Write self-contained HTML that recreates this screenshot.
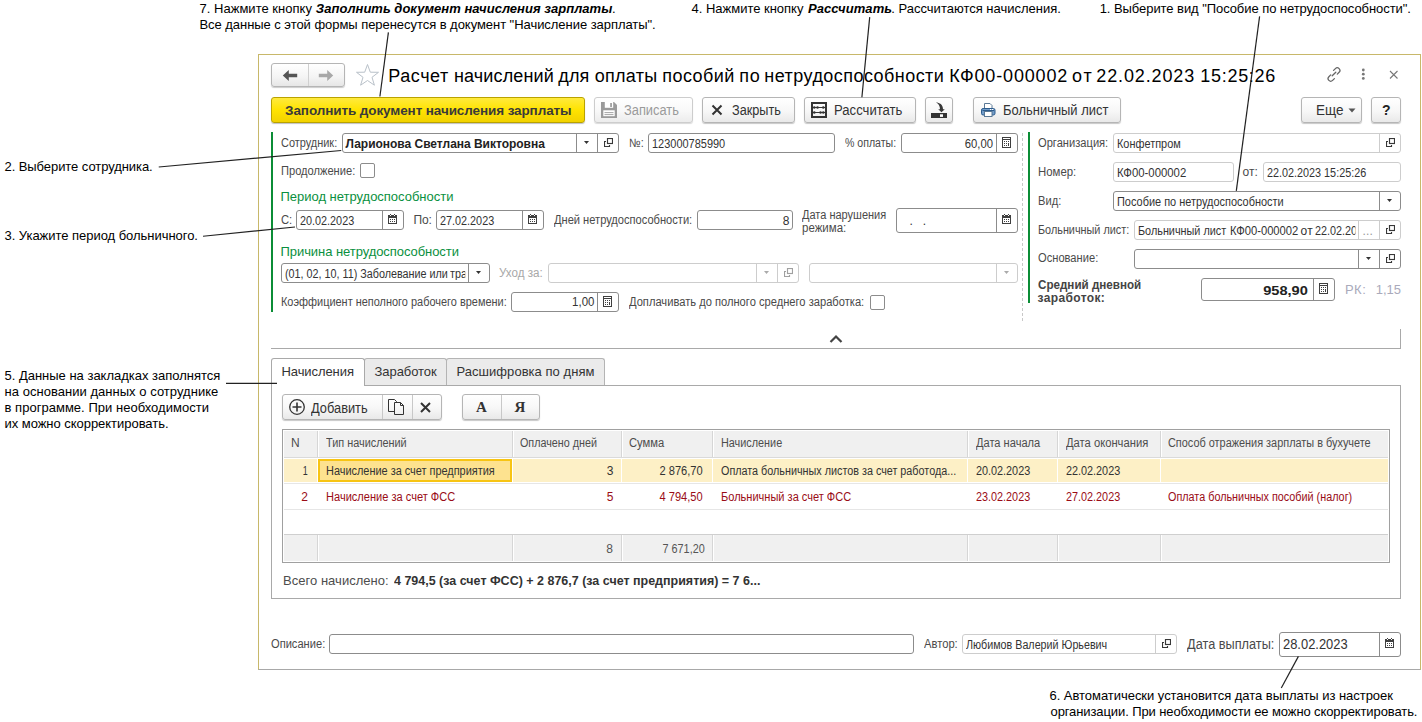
<!DOCTYPE html>
<html><head><meta charset="utf-8"><title>1C</title>
<style>
html,body{margin:0;padding:0;background:#fff;width:1422px;height:722px;overflow:hidden;position:relative;font-family:"Liberation Sans", sans-serif;}
body>div,body>svg{position:absolute;box-sizing:border-box;}
.t{white-space:pre;}
.btn{border:1px solid #b5b5b5;border-radius:3px;background:linear-gradient(#ffffff,#f7f7f7 55%,#e9e9e9);box-shadow:0 1px 1px rgba(0,0,0,0.22);}
.fld{border:1px solid #8f8f8f;border-radius:3px;background:#fff;}
.fldl{border:1px solid #cfcfcf;border-radius:3px;background:#fff;}
</style></head><body>
<div style="left:258px;top:54px;width:1163px;height:616px;border:1px solid #c8b86a;border-bottom-color:#a8a8a8;"></div>
<div style="left:271px;top:63px;width:74px;height:24px;border:1px solid #b5b5b5;border-radius:3px;background:linear-gradient(#fff,#f4f4f4 60%,#e6e6e6);box-shadow:0 1px 1px rgba(0,0,0,.2);"></div>
<div style="left:308px;top:64px;width:1px;height:22px;background:#d0d0d0;"></div>
<svg style="left:282px;top:69px" width="16" height="13" viewBox="0 0 16 13"><path d="M0.8 6.5 L6.8 1 L6.8 4.7 L15.2 4.7 L15.2 8.3 L6.8 8.3 L6.8 12 Z" fill="#555"/></svg>
<svg style="left:318px;top:69px" width="16" height="13" viewBox="0 0 16 13"><path d="M15.2 6.5 L9.2 1 L9.2 4.7 L0.8 4.7 L0.8 8.3 L9.2 8.3 L9.2 12 Z" fill="#a8a8a8"/></svg>
<svg style="left:355px;top:63px" width="25" height="24" viewBox="0 0 25 24"><path d="M12.5 1.5 L15.3 9.2 L23.5 9.3 L17 14.3 L19.4 22.2 L12.5 17.5 L5.6 22.2 L8 14.3 L1.5 9.3 L9.7 9.2 Z" fill="none" stroke="#b9c1c9" stroke-width="1"/></svg>
<div class="t" style="top:66.76px;font-size:18px;line-height:18px;color:#000;letter-spacing:0.543px;left:388.30px;">Расчет</div>
<div class="t" style="top:66.76px;font-size:18px;line-height:18px;color:#000;letter-spacing:0.146px;left:454.00px;">начислений</div>
<div class="t" style="top:66.76px;font-size:18px;line-height:18px;color:#000;letter-spacing:0.107px;left:558.30px;">для</div>
<div class="t" style="top:66.76px;font-size:18px;line-height:18px;color:#000;letter-spacing:0.304px;left:594.70px;">оплаты</div>
<div class="t" style="top:66.76px;font-size:18px;line-height:18px;color:#000;letter-spacing:0.432px;left:662.30px;">пособий</div>
<div class="t" style="top:66.76px;font-size:18px;line-height:18px;color:#000;letter-spacing:0.614px;left:739.30px;">по</div>
<div class="t" style="top:66.76px;font-size:18px;line-height:18px;color:#000;letter-spacing:0.454px;left:764.30px;">нетрудоспособности</div>
<div class="t" style="top:66.76px;font-size:18px;line-height:18px;color:#000;letter-spacing:0.834px;left:949.30px;">КФ00-000002</div>
<div class="t" style="top:66.76px;font-size:18px;line-height:18px;color:#000;letter-spacing:1.921px;left:1071.90px;">от</div>
<div class="t" style="top:66.76px;font-size:18px;line-height:18px;color:#000;letter-spacing:0.876px;left:1096.30px;">22.02.2023</div>
<div class="t" style="top:66.76px;font-size:18px;line-height:18px;color:#000;letter-spacing:0.700px;left:1200.30px;">15:25:26</div>
<svg style="left:1325px;top:66px" width="18" height="17" viewBox="0 0 18 17"><g fill="none" stroke="#666" stroke-width="1.3" stroke-linecap="round"><path d="M7.2 9.8 L10.8 6.2"/><path d="M8.6 4.4 L10.4 2.6 a2.6 2.6 0 0 1 3.7 3.7 L12.3 8.1"/><path d="M9.4 12.6 L7.6 14.4 a2.6 2.6 0 0 1 -3.7 -3.7 L5.7 8.9"/></g></svg>
<svg style="left:1360px;top:68px" width="7" height="13" viewBox="0 0 7 13"><g fill="#777"><circle cx="3.3" cy="2" r="1.4"/><circle cx="3.3" cy="6.2" r="1.4"/><circle cx="3.3" cy="10.4" r="1.4"/></g></svg>
<svg style="left:1389px;top:70px" width="10" height="10" viewBox="0 0 10 10"><path d="M1 1 L8.5 8.5 M8.5 1 L1 8.5" stroke="#777" stroke-width="1.1"/></svg>
<div style="left:271px;top:97px;width:314px;height:26px;border:1px solid #b9a200;border-radius:3px;background:linear-gradient(#ffea3d,#ffe300 50%,#f2d200);box-shadow:0 1px 1px rgba(0,0,0,.25);"></div>
<div class="t" style="top:103.57px;font-size:13.5px;line-height:13.5px;color:#3a3a3a;font-weight:700;letter-spacing:-0.102px;left:285.10px;">Заполнить документ начисления зарплаты</div>
<div style="left:594px;top:97px;width:99px;height:26px;border:1px solid #cdcdcd;border-radius:3px;background:linear-gradient(#fff,#f8f8f8 55%,#ececec);box-shadow:0 1px 1px rgba(0,0,0,.15);"></div>
<svg style="left:601px;top:102px" width="16" height="16" viewBox="0 0 16 16"><path d="M0 0 H13 L16 3 V16 H0 Z" fill="#9a9a9a"/><rect x="2.3" y="8.3" width="11.4" height="5.9" fill="#fff"/><rect x="3.5" y="10.2" width="9" height="0.9" fill="#9a9a9a"/><rect x="3.5" y="12.2" width="9" height="0.9" fill="#9a9a9a"/><rect x="3.8" y="0" width="8.4" height="5.8" fill="#fff"/><rect x="9.2" y="1" width="1.7" height="4" fill="#9a9a9a"/></svg>
<div class="t" style="top:103.15px;font-size:14px;line-height:14px;color:#9a9a9a;left:624.00px;transform:scaleX(0.9179);transform-origin:0 0;">Записать</div>
<div class="btn" style="left:702px;top:97px;width:93px;height:26px;class"></div>
<svg style="left:711px;top:104px" width="12" height="12" viewBox="0 0 12 12"><path d="M1.5 1.5 L10.5 10.5 M10.5 1.5 L1.5 10.5" stroke="#333" stroke-width="2"/></svg>
<div class="t" style="top:103.15px;font-size:14px;line-height:14px;color:#333;left:732.20px;transform:scaleX(0.9068);transform-origin:0 0;">Закрыть</div>
<div class="btn" style="left:804px;top:97px;width:112px;height:26px;"></div>
<svg style="left:811px;top:102px" width="16" height="16" viewBox="0 0 16 16"><rect x="1" y="1" width="14" height="14" fill="none" stroke="#333" stroke-width="2"/><g fill="#333"><rect x="1" y="5" width="14" height="1"/><rect x="1" y="10" width="14" height="1"/><circle cx="3.3" cy="5.5" r="1.25"/><circle cx="6.5" cy="5.5" r="1.25"/><circle cx="12.3" cy="5.5" r="1.25"/><circle cx="3.3" cy="10.5" r="1.25"/><circle cx="9.5" cy="10.5" r="1.25"/><circle cx="12.3" cy="10.5" r="1.25"/></g></svg>
<div class="t" style="top:103.15px;font-size:14px;line-height:14px;color:#333;left:833.50px;transform:scaleX(0.9368);transform-origin:0 0;">Рассчитать</div>
<div class="btn" style="left:925px;top:97px;width:28px;height:26px;"></div>
<svg style="left:931px;top:102px" width="16" height="16" viewBox="0 0 16 16"><rect x="0" y="11" width="16" height="5" fill="#333"/><rect x="9" y="12.3" width="3" height="2.6" fill="#fff"/><path d="M5 0.5 C8.5 0.5 12 2.5 12 7.2 L13.8 7.2 L10.5 10.2 L7.2 7.2 L9 7.2 C9 4 7.5 1.5 5 0.5 Z" fill="#383838"/></svg>
<div class="btn" style="left:973px;top:97px;width:148px;height:26px;"></div>
<svg style="left:981px;top:103px" width="15" height="15" viewBox="0 0 15 15"><path d="M3.5 0.5 H9 L11 2.5 V6 H3.5 Z" fill="#fff" stroke="#5a7895" stroke-width="1"/><rect x="0.5" y="5.5" width="13.5" height="6.5" rx="1.6" fill="#739dc9" stroke="#2c5b8c" stroke-width="1"/><rect x="1.5" y="7" width="11.5" height="1" fill="#2c5b8c"/><rect x="9" y="6" width="1.2" height="1" fill="#fff"/><rect x="11" y="6" width="1.2" height="1" fill="#fff"/><rect x="3.5" y="8.5" width="7.5" height="5" fill="#fff" stroke="#5a7895" stroke-width="1"/></svg>
<div class="t" style="top:103.15px;font-size:14px;line-height:14px;color:#333;left:1002.50px;transform:scaleX(0.9257);transform-origin:0 0;">Больничный лист</div>
<div class="btn" style="left:1301px;top:97px;width:61px;height:26px;"></div>
<div class="t" style="top:103.15px;font-size:14px;line-height:14px;color:#333;left:1315.50px;transform:scaleX(0.9644);transform-origin:0 0;">Еще</div>
<svg style="left:1348px;top:108px" width="8" height="5" viewBox="0 0 8 5"><path d="M0.5 0.5 H7.5 L4 4.5 Z" fill="#555"/></svg>
<div class="btn" style="left:1371px;top:97px;width:30px;height:26px;"></div>
<div class="t" style="top:103.15px;font-size:14px;line-height:14px;color:#222;font-weight:700;letter-spacing:-0.022px;left:1382.00px;">?</div>
<div style="left:271px;top:132px;width:2px;height:180px;background:#0b8d36;"></div>
<div style="left:1028px;top:132px;width:2px;height:171px;background:#0b8d36;"></div>
<div style="left:1022px;top:133px;width:1px;height:188px;background:repeating-linear-gradient(#c8c8c8 0 3px, transparent 3px 5px);"></div>
<div class="t" style="top:137.34px;font-size:12px;line-height:12px;color:#4a4a4a;left:280.50px;transform:scaleX(0.9118);transform-origin:0 0;">Сотрудник:</div>
<div style="left:342px;top:133px;width:277px;height:20px;border:1px solid #8c8c8c;border-radius:3px;background:#fff;"></div>
<div style="left:576px;top:134px;width:1px;height:18px;background:#8c8c8c;"></div>
<div style="left:597px;top:134px;width:1px;height:18px;background:#8c8c8c;"></div>
<div class="t" style="top:137.84px;font-size:12px;line-height:12px;color:#222;font-weight:700;letter-spacing:-0.023px;left:345.50px;">Ларионова Светлана Викторовна</div>
<svg style="left:584px;top:141px" width="5" height="3" viewBox="0 0 5 3"><path d="M0 0 H5 L2.5 3 Z" fill="#333"/></svg>
<svg style="left:604px;top:138px" width="9" height="9" viewBox="0 0 9 9"><rect x="3.5" y="0.5" width="5" height="5" fill="none" stroke="#383838" stroke-width="1.15"/><path d="M2 3.5 H0.5 V8.5 H5.5 V7" fill="none" stroke="#383838" stroke-width="1.15"/></svg>
<div class="t" style="top:137.34px;font-size:12px;line-height:12px;color:#4a4a4a;left:628.50px;transform:scaleX(0.9061);transform-origin:0 0;">№:</div>
<div style="left:648px;top:133px;width:187px;height:20px;border:1px solid #8c8c8c;border-radius:3px;background:#fff;"></div>
<div class="t" style="top:137.84px;font-size:12px;line-height:12px;color:#333333;left:651.50px;transform:scaleX(0.9140);transform-origin:0 0;">123000785990</div>
<div class="t" style="top:137.34px;font-size:12px;line-height:12px;color:#4a4a4a;left:844.50px;transform:scaleX(0.8814);transform-origin:0 0;">% оплаты:</div>
<div style="left:901px;top:133px;width:117px;height:20px;border:1px solid #8c8c8c;border-radius:3px;background:#fff;"></div>
<div style="left:996px;top:134px;width:1px;height:18px;background:#8c8c8c;"></div>
<div class="t" style="top:137.84px;font-size:12px;line-height:12px;color:#333333;right:428.50px;transform:scaleX(0.9404);transform-origin:100% 0;">60,00</div>
<svg style="left:1002px;top:137px" width="9" height="11" viewBox="0 0 9 11" shape-rendering="crispEdges"><rect x="0" y="0" width="9" height="11" fill="#404040"/><rect x="1" y="1" width="7" height="1" fill="#fff"/><rect x="1" y="3" width="7" height="7" fill="#fff"/><g fill="#404040"><rect x="2" y="4" width="1" height="1"/><rect x="4" y="4" width="1" height="1"/><rect x="6" y="4" width="1" height="1"/><rect x="2" y="6" width="1" height="1"/><rect x="4" y="6" width="1" height="1"/><rect x="2" y="8" width="1" height="1"/><rect x="4" y="8" width="1" height="1"/><rect x="6" y="6" width="1" height="3"/></g></svg>
<div class="t" style="top:165.34px;font-size:12px;line-height:12px;color:#4a4a4a;left:280.50px;transform:scaleX(0.9258);transform-origin:0 0;">Продолжение:</div>
<div style="left:360px;top:163px;width:15px;height:15px;border:1px solid #8c8c8c;border-radius:2px;background:#fff;"></div>
<div class="t" style="top:189.50px;font-size:13px;line-height:13px;color:#0a9040;letter-spacing:-0.017px;left:280.50px;">Период нетрудоспособности</div>
<div class="t" style="top:214.34px;font-size:12px;line-height:12px;color:#4a4a4a;left:280.50px;transform:scaleX(0.9363);transform-origin:0 0;">С:</div>
<div style="left:296px;top:210px;width:108px;height:20px;border:1px solid #8c8c8c;border-radius:3px;background:#fff;"></div>
<div style="left:382px;top:211px;width:1px;height:18px;background:#8c8c8c;"></div>
<div class="t" style="top:214.84px;font-size:12px;line-height:12px;color:#333333;left:299.50px;transform:scaleX(0.9022);transform-origin:0 0;">20.02.2023</div>
<svg style="left:388px;top:214px" width="9" height="10" viewBox="0 0 9 10" shape-rendering="crispEdges"><rect x="0" y="1" width="9" height="9" fill="#404040"/><rect x="1" y="4" width="7" height="5" fill="#fff"/><g fill="#404040"><rect x="2" y="0" width="1" height="1"/><rect x="6" y="0" width="1" height="1"/><rect x="2" y="5" width="1" height="1"/><rect x="4" y="5" width="1" height="1"/><rect x="6" y="5" width="1" height="1"/><rect x="2" y="7" width="1" height="1"/><rect x="4" y="7" width="1" height="1"/><rect x="6" y="7" width="1" height="1"/></g><g fill="#fff"><rect x="2" y="1" width="1" height="1"/><rect x="6" y="1" width="1" height="1"/></g></svg>
<div class="t" style="top:214.34px;font-size:12px;line-height:12px;color:#4a4a4a;letter-spacing:-0.160px;left:413.50px;">По:</div>
<div style="left:436px;top:210px;width:108px;height:20px;border:1px solid #8c8c8c;border-radius:3px;background:#fff;"></div>
<div style="left:522px;top:211px;width:1px;height:18px;background:#8c8c8c;"></div>
<div class="t" style="top:214.84px;font-size:12px;line-height:12px;color:#333333;left:439.50px;transform:scaleX(0.9022);transform-origin:0 0;">27.02.2023</div>
<svg style="left:528px;top:214px" width="9" height="10" viewBox="0 0 9 10" shape-rendering="crispEdges"><rect x="0" y="1" width="9" height="9" fill="#404040"/><rect x="1" y="4" width="7" height="5" fill="#fff"/><g fill="#404040"><rect x="2" y="0" width="1" height="1"/><rect x="6" y="0" width="1" height="1"/><rect x="2" y="5" width="1" height="1"/><rect x="4" y="5" width="1" height="1"/><rect x="6" y="5" width="1" height="1"/><rect x="2" y="7" width="1" height="1"/><rect x="4" y="7" width="1" height="1"/><rect x="6" y="7" width="1" height="1"/></g><g fill="#fff"><rect x="2" y="1" width="1" height="1"/><rect x="6" y="1" width="1" height="1"/></g></svg>
<div class="t" style="top:214.34px;font-size:12px;line-height:12px;color:#4a4a4a;left:553.50px;transform:scaleX(0.9253);transform-origin:0 0;">Дней нетрудоспособности:</div>
<div style="left:697px;top:210px;width:96px;height:20px;border:1px solid #8c8c8c;border-radius:3px;background:#fff;"></div>
<div class="t" style="top:214.84px;font-size:12px;line-height:12px;color:#333333;letter-spacing:0.633px;right:631.87px;">8</div>
<div class="t" style="top:209.34px;font-size:12px;line-height:12px;color:#4a4a4a;left:802.00px;transform:scaleX(0.9166);transform-origin:0 0;">Дата нарушения</div>
<div class="t" style="top:221.84px;font-size:12px;line-height:12px;color:#4a4a4a;left:802.00px;transform:scaleX(0.9580);transform-origin:0 0;">режима:</div>
<div style="left:896px;top:208px;width:122px;height:25px;border:1px solid #8c8c8c;border-radius:3px;background:#fff;"></div>
<div style="left:996px;top:209px;width:1px;height:23px;background:#8c8c8c;"></div>
<div class="t" style="top:214.84px;font-size:12px;line-height:12px;color:#333333;left:909.50px;">.   .</div>
<svg style="left:1002px;top:214px" width="9" height="10" viewBox="0 0 9 10" shape-rendering="crispEdges"><rect x="0" y="1" width="9" height="9" fill="#404040"/><rect x="1" y="4" width="7" height="5" fill="#fff"/><g fill="#404040"><rect x="2" y="0" width="1" height="1"/><rect x="6" y="0" width="1" height="1"/><rect x="2" y="5" width="1" height="1"/><rect x="4" y="5" width="1" height="1"/><rect x="6" y="5" width="1" height="1"/><rect x="2" y="7" width="1" height="1"/><rect x="4" y="7" width="1" height="1"/><rect x="6" y="7" width="1" height="1"/></g><g fill="#fff"><rect x="2" y="1" width="1" height="1"/><rect x="6" y="1" width="1" height="1"/></g></svg>
<div class="t" style="top:245.00px;font-size:13px;line-height:13px;color:#0a9040;letter-spacing:-0.063px;left:280.50px;">Причина нетрудоспособности</div>
<div style="left:281px;top:263px;width:209px;height:20px;border:1px solid #8c8c8c;border-radius:3px;background:#fff;"></div>
<div style="left:468px;top:264px;width:1px;height:18px;background:#8c8c8c;"></div>
<div class="t" style="top:268.34px;font-size:12px;line-height:12px;color:#333;left:284.80px;transform:scaleX(0.8981);transform-origin:0 0;">(01, 02, 10, 11) Заболевание или</div>
<div class="t" style="top:268.34px;font-size:12px;line-height:12px;color:#333;width:16.82px;overflow:hidden;left:450.40px;transform:scaleX(0.8980);transform-origin:0 0;">травма</div>
<svg style="left:476px;top:271px" width="5" height="3" viewBox="0 0 5 3"><path d="M0 0 H5 L2.5 3 Z" fill="#333"/></svg>
<div class="t" style="top:267.34px;font-size:12px;line-height:12px;color:#a8a8a8;left:499.00px;transform:scaleX(0.9681);transform-origin:0 0;">Уход за:</div>
<div style="left:548px;top:263px;width:251px;height:20px;border:1px solid #cdcdcd;border-radius:3px;background:#fff;"></div>
<div style="left:756px;top:264px;width:1px;height:18px;background:#cdcdcd;"></div>
<div style="left:777px;top:264px;width:1px;height:18px;background:#cdcdcd;"></div>
<svg style="left:764px;top:271px" width="5" height="3" viewBox="0 0 5 3"><path d="M0 0 H5 L2.5 3 Z" fill="#aaa"/></svg>
<svg style="left:784px;top:268px" width="9" height="9" viewBox="0 0 9 9"><rect x="3.5" y="0.5" width="5" height="5" fill="none" stroke="#a0a0a0" stroke-width="1.15"/><path d="M2 3.5 H0.5 V8.5 H5.5 V7" fill="none" stroke="#a0a0a0" stroke-width="1.15"/></svg>
<div style="left:809px;top:263px;width:209px;height:20px;border:1px solid #cdcdcd;border-radius:3px;background:#fff;"></div>
<div style="left:996px;top:264px;width:1px;height:18px;background:#cdcdcd;"></div>
<svg style="left:1004px;top:271px" width="5" height="3" viewBox="0 0 5 3"><path d="M0 0 H5 L2.5 3 Z" fill="#aaa"/></svg>
<div class="t" style="top:296.34px;font-size:12px;line-height:12px;color:#4a4a4a;left:280.50px;transform:scaleX(0.9116);transform-origin:0 0;">Коэффициент неполного рабочего времени:</div>
<div style="left:511px;top:292px;width:108px;height:20px;border:1px solid #8c8c8c;border-radius:3px;background:#fff;"></div>
<div style="left:597px;top:293px;width:1px;height:18px;background:#8c8c8c;"></div>
<div class="t" style="top:296.34px;font-size:12px;line-height:12px;color:#333333;right:827.50px;transform:scaleX(0.9528);transform-origin:100% 0;">1,00</div>
<svg style="left:603px;top:296px" width="9" height="11" viewBox="0 0 9 11" shape-rendering="crispEdges"><rect x="0" y="0" width="9" height="11" fill="#404040"/><rect x="1" y="1" width="7" height="1" fill="#fff"/><rect x="1" y="3" width="7" height="7" fill="#fff"/><g fill="#404040"><rect x="2" y="4" width="1" height="1"/><rect x="4" y="4" width="1" height="1"/><rect x="6" y="4" width="1" height="1"/><rect x="2" y="6" width="1" height="1"/><rect x="4" y="6" width="1" height="1"/><rect x="2" y="8" width="1" height="1"/><rect x="4" y="8" width="1" height="1"/><rect x="6" y="6" width="1" height="3"/></g></svg>
<div class="t" style="top:296.34px;font-size:12px;line-height:12px;color:#4a4a4a;left:628.50px;transform:scaleX(0.9289);transform-origin:0 0;">Доплачивать до полного среднего заработка:</div>
<div style="left:870px;top:295px;width:15px;height:15px;border:1px solid #8c8c8c;border-radius:2px;background:#fff;"></div>
<div class="t" style="top:137.34px;font-size:12px;line-height:12px;color:#4a4a4a;left:1037.50px;transform:scaleX(0.9274);transform-origin:0 0;">Организация:</div>
<div style="left:1113px;top:133px;width:288px;height:20px;border:1px solid #cdcdcd;border-radius:3px;background:#fff;"></div>
<div style="left:1379px;top:134px;width:1px;height:18px;background:#cdcdcd;"></div>
<div class="t" style="top:137.84px;font-size:12px;line-height:12px;color:#333333;left:1116.50px;transform:scaleX(0.9096);transform-origin:0 0;">Конфетпром</div>
<svg style="left:1386px;top:138px" width="9" height="9" viewBox="0 0 9 9"><rect x="3.5" y="0.5" width="5" height="5" fill="none" stroke="#383838" stroke-width="1.15"/><path d="M2 3.5 H0.5 V8.5 H5.5 V7" fill="none" stroke="#383838" stroke-width="1.15"/></svg>
<div class="t" style="top:165.84px;font-size:12px;line-height:12px;color:#4a4a4a;left:1037.50px;transform:scaleX(0.9497);transform-origin:0 0;">Номер:</div>
<div style="left:1113px;top:162px;width:121px;height:20px;border:1px solid #cdcdcd;border-radius:3px;background:#fff;"></div>
<div class="t" style="top:166.84px;font-size:12px;line-height:12px;color:#333333;left:1116.50px;transform:scaleX(0.9474);transform-origin:0 0;">КФ00-000002</div>
<div class="t" style="top:165.84px;font-size:12px;line-height:12px;color:#4a4a4a;letter-spacing:0.035px;left:1242.50px;">от:</div>
<div style="left:1263px;top:162px;width:138px;height:20px;border:1px solid #cdcdcd;border-radius:3px;background:#fff;"></div>
<div class="t" style="top:166.84px;font-size:12px;line-height:12px;color:#333333;left:1266.50px;transform:scaleX(0.9008);transform-origin:0 0;">22.02.2023 15:25:26</div>
<div class="t" style="top:195.34px;font-size:12px;line-height:12px;color:#4a4a4a;left:1037.50px;transform:scaleX(0.9272);transform-origin:0 0;">Вид:</div>
<div style="left:1113px;top:191px;width:288px;height:20px;border:1px solid #8c8c8c;border-radius:3px;background:#fff;"></div>
<div style="left:1379px;top:192px;width:1px;height:18px;background:#8c8c8c;"></div>
<div class="t" style="top:195.84px;font-size:12px;line-height:12px;color:#333333;left:1116.50px;transform:scaleX(0.9121);transform-origin:0 0;">Пособие по нетрудоспособности</div>
<svg style="left:1387px;top:199px" width="5" height="3" viewBox="0 0 5 3"><path d="M0 0 H5 L2.5 3 Z" fill="#333"/></svg>
<div class="t" style="top:224.34px;font-size:12px;line-height:12px;color:#4a4a4a;left:1037.50px;transform:scaleX(0.9033);transform-origin:0 0;">Больничный лист:</div>
<div style="left:1134px;top:220px;width:267px;height:20px;border:1px solid #cdcdcd;border-radius:3px;background:#fff;"></div>
<div style="left:1358px;top:221px;width:1px;height:18px;background:#cdcdcd;"></div>
<div style="left:1379px;top:221px;width:1px;height:18px;background:#cdcdcd;"></div>
<div class="t" style="top:224.84px;font-size:12px;line-height:12px;color:#333;left:1138.10px;transform:scaleX(0.9034);transform-origin:0 0;">Больничный лист</div>
<div class="t" style="top:224.84px;font-size:12px;line-height:12px;color:#333;left:1229.70px;transform:scaleX(0.9349);transform-origin:0 0;">КФ00-000002</div>
<div class="t" style="top:224.84px;font-size:12px;line-height:12px;color:#333;letter-spacing:0.414px;left:1300.50px;">от</div>
<div class="t" style="top:224.84px;font-size:12px;line-height:12px;color:#333;width:45.11px;overflow:hidden;left:1314.90px;transform:scaleX(0.9000);transform-origin:0 0;">22.02.2023</div>
<div class="t" style="top:224.84px;font-size:12px;line-height:12px;color:#999;letter-spacing:0.152px;left:1362.50px;">...</div>
<svg style="left:1386px;top:225px" width="9" height="9" viewBox="0 0 9 9"><rect x="3.5" y="0.5" width="5" height="5" fill="none" stroke="#383838" stroke-width="1.15"/><path d="M2 3.5 H0.5 V8.5 H5.5 V7" fill="none" stroke="#383838" stroke-width="1.15"/></svg>
<div class="t" style="top:252.34px;font-size:12px;line-height:12px;color:#4a4a4a;left:1037.50px;transform:scaleX(0.9281);transform-origin:0 0;">Основание:</div>
<div style="left:1134px;top:249px;width:267px;height:20px;border:1px solid #8c8c8c;border-radius:3px;background:#fff;"></div>
<div style="left:1358px;top:250px;width:1px;height:18px;background:#8c8c8c;"></div>
<div style="left:1379px;top:250px;width:1px;height:18px;background:#8c8c8c;"></div>
<svg style="left:1366px;top:257px" width="5" height="3" viewBox="0 0 5 3"><path d="M0 0 H5 L2.5 3 Z" fill="#333"/></svg>
<svg style="left:1386px;top:254px" width="9" height="9" viewBox="0 0 9 9"><rect x="3.5" y="0.5" width="5" height="5" fill="none" stroke="#383838" stroke-width="1.15"/><path d="M2 3.5 H0.5 V8.5 H5.5 V7" fill="none" stroke="#383838" stroke-width="1.15"/></svg>
<div class="t" style="top:279.14px;font-size:12px;line-height:12px;color:#444;font-weight:700;left:1037.50px;transform:scaleX(0.9698);transform-origin:0 0;">Средний дневной</div>
<div class="t" style="top:292.14px;font-size:12px;line-height:12px;color:#444;font-weight:700;letter-spacing:0.371px;left:1037.50px;">заработок:</div>
<div style="left:1201px;top:278px;width:134px;height:23px;border:1px solid #8c8c8c;border-radius:3px;background:#fff;"></div>
<div style="left:1313px;top:279px;width:1px;height:21px;background:#8c8c8c;"></div>
<div class="t" style="top:284.00px;font-size:13px;line-height:13px;color:#222;font-weight:700;right:113.80px;transform:scaleX(1.1217);transform-origin:100% 0;">958,90</div>
<svg style="left:1319px;top:283px" width="9" height="11" viewBox="0 0 9 11" shape-rendering="crispEdges"><rect x="0" y="0" width="9" height="11" fill="#404040"/><rect x="1" y="1" width="7" height="1" fill="#fff"/><rect x="1" y="3" width="7" height="7" fill="#fff"/><g fill="#404040"><rect x="2" y="4" width="1" height="1"/><rect x="4" y="4" width="1" height="1"/><rect x="6" y="4" width="1" height="1"/><rect x="2" y="6" width="1" height="1"/><rect x="4" y="6" width="1" height="1"/><rect x="2" y="8" width="1" height="1"/><rect x="4" y="8" width="1" height="1"/><rect x="6" y="6" width="1" height="3"/></g></svg>
<div class="t" style="top:283.00px;font-size:13px;line-height:13px;color:#aab;letter-spacing:0.535px;left:1344.90px;">РК:</div>
<div class="t" style="top:283.00px;font-size:13px;line-height:13px;color:#aab;letter-spacing:-0.061px;right:21.20px;">1,15</div>
<svg style="left:829px;top:334px" width="14" height="10" viewBox="0 0 14 10"><path d="M1.5 8 L7 2.5 L12.5 8" fill="none" stroke="#444" stroke-width="2.2"/></svg>
<div style="left:271px;top:348px;width:1130px;height:1px;background:#a9a9a9;"></div>
<div style="left:1400px;top:329px;width:1px;height:20px;background:#a9a9a9;"></div>
<div style="left:271px;top:385px;width:1130px;height:214px;border:1px solid #a9a9a9;"></div>
<div style="left:364px;top:358px;width:83px;height:27px;border:1px solid #b4b4b4;border-bottom:none;border-radius:3px 3px 0 0;background:#ebebeb;"></div>
<div style="left:446px;top:358px;width:159px;height:27px;border:1px solid #b4b4b4;border-bottom:none;border-radius:3px 3px 0 0;background:#ebebeb;"></div>
<div style="left:271px;top:358px;width:94px;height:28px;border:1px solid #a9a9a9;border-bottom:none;border-radius:3px 3px 0 0;background:#fff;"></div>
<div style="left:272px;top:384px;width:92px;height:3px;background:#fff;"></div>
<div class="t" style="top:365.00px;font-size:13px;line-height:13px;color:#333;letter-spacing:-0.082px;left:281.50px;">Начисления</div>
<div class="t" style="top:365.00px;font-size:13px;line-height:13px;color:#333;letter-spacing:-0.061px;left:374.50px;">Заработок</div>
<div class="t" style="top:365.00px;font-size:13px;line-height:13px;color:#333;letter-spacing:0.042px;left:456.50px;">Расшифровка по дням</div>
<div class="btn" style="left:282px;top:394px;width:160px;height:26px;"></div>
<div style="left:382px;top:395px;width:1px;height:24px;background:#c8c8c8;"></div>
<div style="left:412px;top:395px;width:1px;height:24px;background:#c8c8c8;"></div>
<svg style="left:288px;top:398px" width="18" height="18" viewBox="0 0 18 18"><circle cx="9" cy="9" r="7.3" fill="none" stroke="#333" stroke-width="1.3"/><path d="M9 4.5 V13.5 M4.5 9 H13.5" stroke="#333" stroke-width="1.6"/></svg>
<div class="t" style="top:400.65px;font-size:14px;line-height:14px;color:#333;left:311.25px;transform:scaleX(0.9157);transform-origin:0 0;">Добавить</div>
<svg style="left:388px;top:399px" width="17" height="17" viewBox="0 0 17 17"><path d="M6.5 12.5 H0.5 V0.5 H6.5 L8.5 2.5 V3.5" fill="none" stroke="#333" stroke-width="1"/><path d="M6.5 3.5 H12.5 L15.5 6.5 V15.5 H6.5 Z M12.5 3.5 V6.5 H15.5" fill="none" stroke="#333" stroke-width="1"/></svg>
<svg style="left:420px;top:402px" width="11" height="11" viewBox="0 0 11 11"><path d="M1 1 L10 10 M10 1 L1 10" stroke="#333" stroke-width="2"/></svg>
<div class="btn" style="left:462px;top:394px;width:78px;height:26px;"></div>
<div style="left:501px;top:395px;width:1px;height:24px;background:#c8c8c8;"></div>
<div class="t" style="left:476px;top:399px;font-family:'Liberation Serif',serif;font-weight:700;font-size:15px;line-height:17px;color:#333">A</div>
<div class="t" style="left:514.5px;top:399px;font-family:'Liberation Serif',serif;font-weight:700;font-size:15px;line-height:17px;color:#333">Я</div>
<div style="left:282px;top:429px;width:1108px;height:134px;border:1px solid #a0a0a0;background:#fff;"></div>
<div style="left:284px;top:431px;width:1104px;height:27px;background:#f0f0f0;border-bottom:1px solid #dadada;"></div>
<div style="left:284px;top:534px;width:1104px;height:27px;background:#f0f0f0;border-top:1px solid #cfcfcf;"></div>
<div style="left:284px;top:459px;width:1104px;height:23px;background:#fdf0c6;"></div>
<div style="left:284px;top:483px;width:1104px;height:1px;background:#e6e6e6;"></div>
<div style="left:284px;top:484px;width:1104px;height:26px;background:#fff;border-bottom:1px solid #e6e6e6;"></div>
<div style="left:317px;top:431px;width:1px;height:26px;background:#d6d6d6;"></div>
<div style="left:318px;top:431px;width:1px;height:26px;background:#fff;"></div>
<div style="left:317px;top:459px;width:1px;height:23px;background:#fff;"></div>
<div style="left:317px;top:535px;width:1px;height:26px;background:#d6d6d6;"></div>
<div style="left:318px;top:535px;width:1px;height:26px;background:#fff;"></div>
<div style="left:512px;top:431px;width:1px;height:26px;background:#d6d6d6;"></div>
<div style="left:513px;top:431px;width:1px;height:26px;background:#fff;"></div>
<div style="left:512px;top:459px;width:1px;height:23px;background:#fff;"></div>
<div style="left:512px;top:535px;width:1px;height:26px;background:#d6d6d6;"></div>
<div style="left:513px;top:535px;width:1px;height:26px;background:#fff;"></div>
<div style="left:621px;top:431px;width:1px;height:26px;background:#d6d6d6;"></div>
<div style="left:622px;top:431px;width:1px;height:26px;background:#fff;"></div>
<div style="left:621px;top:459px;width:1px;height:23px;background:#fff;"></div>
<div style="left:621px;top:535px;width:1px;height:26px;background:#d6d6d6;"></div>
<div style="left:622px;top:535px;width:1px;height:26px;background:#fff;"></div>
<div style="left:712px;top:431px;width:1px;height:26px;background:#d6d6d6;"></div>
<div style="left:713px;top:431px;width:1px;height:26px;background:#fff;"></div>
<div style="left:712px;top:459px;width:1px;height:23px;background:#fff;"></div>
<div style="left:712px;top:535px;width:1px;height:26px;background:#d6d6d6;"></div>
<div style="left:713px;top:535px;width:1px;height:26px;background:#fff;"></div>
<div style="left:967px;top:431px;width:1px;height:26px;background:#d6d6d6;"></div>
<div style="left:968px;top:431px;width:1px;height:26px;background:#fff;"></div>
<div style="left:967px;top:459px;width:1px;height:23px;background:#fff;"></div>
<div style="left:967px;top:535px;width:1px;height:26px;background:#d6d6d6;"></div>
<div style="left:968px;top:535px;width:1px;height:26px;background:#fff;"></div>
<div style="left:1057px;top:431px;width:1px;height:26px;background:#d6d6d6;"></div>
<div style="left:1058px;top:431px;width:1px;height:26px;background:#fff;"></div>
<div style="left:1057px;top:459px;width:1px;height:23px;background:#fff;"></div>
<div style="left:1057px;top:535px;width:1px;height:26px;background:#d6d6d6;"></div>
<div style="left:1058px;top:535px;width:1px;height:26px;background:#fff;"></div>
<div style="left:1160px;top:431px;width:1px;height:26px;background:#d6d6d6;"></div>
<div style="left:1161px;top:431px;width:1px;height:26px;background:#fff;"></div>
<div style="left:1160px;top:459px;width:1px;height:23px;background:#fff;"></div>
<div style="left:1160px;top:535px;width:1px;height:26px;background:#d6d6d6;"></div>
<div style="left:1161px;top:535px;width:1px;height:26px;background:#fff;"></div>
<div style="left:318px;top:459px;width:194px;height:23px;border:2px solid #f7c414;background:#fde28f;"></div>
<div class="t" style="top:436.84px;font-size:12px;line-height:12px;color:#4d4d4d;letter-spacing:0.648px;left:291.00px;">N</div>
<div class="t" style="top:436.84px;font-size:12px;line-height:12px;color:#4d4d4d;left:326.00px;transform:scaleX(0.9062);transform-origin:0 0;">Тип начислений</div>
<div class="t" style="top:436.84px;font-size:12px;line-height:12px;color:#4d4d4d;left:520.00px;transform:scaleX(0.8965);transform-origin:0 0;">Оплачено дней</div>
<div class="t" style="top:436.84px;font-size:12px;line-height:12px;color:#4d4d4d;left:629.00px;transform:scaleX(0.9341);transform-origin:0 0;">Сумма</div>
<div class="t" style="top:436.84px;font-size:12px;line-height:12px;color:#4d4d4d;left:721.00px;transform:scaleX(0.9036);transform-origin:0 0;">Начисление</div>
<div class="t" style="top:436.84px;font-size:12px;line-height:12px;color:#4d4d4d;left:975.50px;transform:scaleX(0.9234);transform-origin:0 0;">Дата начала</div>
<div class="t" style="top:436.84px;font-size:12px;line-height:12px;color:#4d4d4d;left:1065.50px;transform:scaleX(0.9341);transform-origin:0 0;">Дата окончания</div>
<div class="t" style="top:436.84px;font-size:12px;line-height:12px;color:#4d4d4d;left:1168.00px;transform:scaleX(0.9086);transform-origin:0 0;">Способ отражения зарплаты в бухучете</div>
<div class="t" style="top:464.84px;font-size:12px;line-height:12px;color:#333;right:1114.00px;transform:scaleX(0.7452);transform-origin:100% 0;">1</div>
<div class="t" style="top:464.84px;font-size:12px;line-height:12px;color:#333;left:326.00px;transform:scaleX(0.9097);transform-origin:0 0;">Начисление за счет предприятия</div>
<div class="t" style="top:464.84px;font-size:12px;line-height:12px;color:#333;letter-spacing:0.633px;right:807.87px;">3</div>
<div class="t" style="top:464.84px;font-size:12px;line-height:12px;color:#333;right:719.00px;transform:scaleX(0.9251);transform-origin:100% 0;">2 876,70</div>
<div class="t" style="top:464.84px;font-size:12px;line-height:12px;color:#333;left:720.50px;transform:scaleX(0.8991);transform-origin:0 0;">Оплата больничных листов за счет работода...</div>
<div class="t" style="top:464.84px;font-size:12px;line-height:12px;color:#333;left:975.50px;transform:scaleX(0.9022);transform-origin:0 0;">20.02.2023</div>
<div class="t" style="top:464.84px;font-size:12px;line-height:12px;color:#333;left:1065.50px;transform:scaleX(0.9022);transform-origin:0 0;">22.02.2023</div>
<div class="t" style="top:490.84px;font-size:12px;line-height:12px;color:#9a0c16;letter-spacing:0.633px;right:1113.37px;">2</div>
<div class="t" style="top:490.84px;font-size:12px;line-height:12px;color:#9a0c16;left:326.00px;transform:scaleX(0.9214);transform-origin:0 0;">Начисление за счет ФСС</div>
<div class="t" style="top:490.84px;font-size:12px;line-height:12px;color:#9a0c16;letter-spacing:0.633px;right:807.87px;">5</div>
<div class="t" style="top:490.84px;font-size:12px;line-height:12px;color:#9a0c16;right:719.00px;transform:scaleX(0.9251);transform-origin:100% 0;">4 794,50</div>
<div class="t" style="top:490.84px;font-size:12px;line-height:12px;color:#9a0c16;left:720.50px;transform:scaleX(0.9195);transform-origin:0 0;">Больничный за счет ФСС</div>
<div class="t" style="top:490.84px;font-size:12px;line-height:12px;color:#9a0c16;left:975.50px;transform:scaleX(0.9022);transform-origin:0 0;">23.02.2023</div>
<div class="t" style="top:490.84px;font-size:12px;line-height:12px;color:#9a0c16;left:1065.50px;transform:scaleX(0.9022);transform-origin:0 0;">27.02.2023</div>
<div class="t" style="top:490.84px;font-size:12px;line-height:12px;color:#9a0c16;left:1168.00px;transform:scaleX(0.9011);transform-origin:0 0;">Оплата больничных пособий (налог)</div>
<div class="t" style="top:542.84px;font-size:12px;line-height:12px;color:#555;letter-spacing:0.633px;right:808.37px;">8</div>
<div class="t" style="top:542.84px;font-size:12px;line-height:12px;color:#555;right:717.00px;transform:scaleX(0.9031);transform-origin:100% 0;">7 671,20</div>
<div class="t" style="top:574.00px;font-size:13px;line-height:13px;color:#4d4d4d;letter-spacing:0.032px;left:283.00px;">Всего начислено:</div>
<div class="t" style="top:574.00px;font-size:13px;line-height:13px;color:#333;font-weight:700;left:394.00px;transform:scaleX(0.9603);transform-origin:0 0;">4 794,5 (за счет ФСС) + 2 876,7 (за счет предприятия) = 7 6...</div>
<div class="t" style="top:637.84px;font-size:12px;line-height:12px;color:#4a4a4a;left:270.50px;transform:scaleX(0.9261);transform-origin:0 0;">Описание:</div>
<div style="left:329px;top:634px;width:585px;height:20px;border:1px solid #8c8c8c;border-radius:3px;background:#fff;"></div>
<div class="t" style="top:637.84px;font-size:12px;line-height:12px;color:#4a4a4a;left:923.50px;transform:scaleX(0.9325);transform-origin:0 0;">Автор:</div>
<div style="left:962px;top:634px;width:215px;height:20px;border:1px solid #cdcdcd;border-radius:3px;background:#fff;"></div>
<div style="left:1155px;top:635px;width:1px;height:18px;background:#cdcdcd;"></div>
<div class="t" style="top:638.84px;font-size:12px;line-height:12px;color:#333;left:965.50px;transform:scaleX(0.8941);transform-origin:0 0;">Любимов Валерий Юрьевич</div>
<svg style="left:1162px;top:639px" width="9" height="9" viewBox="0 0 9 9"><rect x="3.5" y="0.5" width="5" height="5" fill="none" stroke="#383838" stroke-width="1.15"/><path d="M2 3.5 H0.5 V8.5 H5.5 V7" fill="none" stroke="#383838" stroke-width="1.15"/></svg>
<div class="t" style="top:637.15px;font-size:14px;line-height:14px;color:#4a4a4a;left:1186.50px;transform:scaleX(0.9106);transform-origin:0 0;">Дата выплаты:</div>
<div style="left:1279px;top:632px;width:122px;height:25px;border:1px solid #8c8c8c;border-radius:3px;background:#fff;"></div>
<div style="left:1379px;top:633px;width:1px;height:23px;background:#8c8c8c;"></div>
<div class="t" style="top:637.15px;font-size:14px;line-height:14px;color:#333;left:1282.70px;transform:scaleX(0.9221);transform-origin:0 0;">28.02.2023</div>
<svg style="left:1385px;top:638px" width="9" height="10" viewBox="0 0 9 10" shape-rendering="crispEdges"><rect x="0" y="1" width="9" height="9" fill="#404040"/><rect x="1" y="4" width="7" height="5" fill="#fff"/><g fill="#404040"><rect x="2" y="0" width="1" height="1"/><rect x="6" y="0" width="1" height="1"/><rect x="2" y="5" width="1" height="1"/><rect x="4" y="5" width="1" height="1"/><rect x="6" y="5" width="1" height="1"/><rect x="2" y="7" width="1" height="1"/><rect x="4" y="7" width="1" height="1"/><rect x="6" y="7" width="1" height="1"/></g><g fill="#fff"><rect x="2" y="1" width="1" height="1"/><rect x="6" y="1" width="1" height="1"/></g></svg>
<div class="t" style="top:2.00px;font-size:13px;line-height:13px;color:#000;letter-spacing:0.021px;left:199.50px;">7. Нажмите кнопку</div>
<div class="t" style="top:2.00px;font-size:13px;line-height:13px;color:#000;font-weight:700;font-style:italic;letter-spacing:0.030px;left:315.80px;">Заполнить документ начисления зарплаты</div>
<div class="t" style="top:2.00px;font-size:13px;line-height:13px;color:#000;left:612.00px;">.</div>
<div class="t" style="top:18.00px;font-size:13px;line-height:13px;color:#000;letter-spacing:-0.047px;left:199.50px;">Все данные с этой формы перенесутся в документ "Начисление зарплаты".</div>
<div class="t" style="top:2.00px;font-size:13px;line-height:13px;color:#000;letter-spacing:-0.010px;left:691.50px;">4. Нажмите кнопку</div>
<div class="t" style="top:2.00px;font-size:13px;line-height:13px;color:#000;font-weight:700;font-style:italic;letter-spacing:0.075px;left:807.90px;">Рассчитать</div>
<div class="t" style="top:2.00px;font-size:13px;line-height:13px;color:#000;letter-spacing:0.001px;left:891.30px;">. Рассчитаются начисления.</div>
<div class="t" style="top:2.00px;font-size:13px;line-height:13px;color:#000;letter-spacing:-0.066px;left:1099.70px;">1. Выберите вид "Пособие по нетрудоспособности".</div>
<div class="t" style="top:160.00px;font-size:13px;line-height:13px;color:#000;letter-spacing:-0.069px;left:4.50px;">2. Выберите сотрудника.</div>
<div class="t" style="top:228.50px;font-size:13px;line-height:13px;color:#000;letter-spacing:-0.037px;left:4.50px;">3. Укажите период больничного.</div>
<div class="t" style="top:369.00px;font-size:13px;line-height:13px;color:#000;letter-spacing:-0.009px;left:4.50px;">5. Данные на закладках заполнятся</div>
<div class="t" style="top:385.00px;font-size:13px;line-height:13px;color:#000;letter-spacing:0.035px;left:4.50px;">на основании данных о сотруднике</div>
<div class="t" style="top:401.00px;font-size:13px;line-height:13px;color:#000;letter-spacing:0.026px;left:4.50px;">в программе. При необходимости</div>
<div class="t" style="top:417.00px;font-size:13px;line-height:13px;color:#000;letter-spacing:-0.037px;left:4.50px;">их можно скорректировать.</div>
<div class="t" style="top:689.00px;font-size:13px;line-height:13px;color:#000;letter-spacing:-0.037px;left:1049.50px;">6. Автоматически установится дата выплаты из настроек</div>
<div class="t" style="top:704.50px;font-size:13px;line-height:13px;color:#000;letter-spacing:-0.098px;left:1050.50px;">организации. При необходимости ее можно скорректировать.</div>
<svg style="left:0;top:0;width:1422px;height:722px;z-index:50;pointer-events:none" width="1422" height="722"><line x1="388.4" y1="32.4" x2="379.9" y2="96.5" stroke="#222" stroke-width="1.2"/></svg>
<svg style="left:0;top:0;width:1422px;height:722px;z-index:50;pointer-events:none" width="1422" height="722"><line x1="869.7" y1="17.1" x2="861.9" y2="97.2" stroke="#222" stroke-width="1.2"/></svg>
<svg style="left:0;top:0;width:1422px;height:722px;z-index:50;pointer-events:none" width="1422" height="722"><line x1="1259.6" y1="16.3" x2="1236.3" y2="190.9" stroke="#222" stroke-width="1.2"/></svg>
<svg style="left:0;top:0;width:1422px;height:722px;z-index:50;pointer-events:none" width="1422" height="722"><line x1="158.75" y1="167" x2="341.25" y2="150.5" stroke="#222" stroke-width="1.2"/></svg>
<svg style="left:0;top:0;width:1422px;height:722px;z-index:50;pointer-events:none" width="1422" height="722"><line x1="203" y1="236.25" x2="295" y2="227" stroke="#222" stroke-width="1.2"/></svg>
<svg style="left:0;top:0;width:1422px;height:722px;z-index:50;pointer-events:none" width="1422" height="722"><line x1="226" y1="383.4" x2="277" y2="383.4" stroke="#222" stroke-width="1.2"/></svg>
<svg style="left:0;top:0;width:1422px;height:722px;z-index:50;pointer-events:none" width="1422" height="722"><line x1="1298.4" y1="656.4" x2="1281.3" y2="688" stroke="#222" stroke-width="1.2"/></svg>
</body></html>
